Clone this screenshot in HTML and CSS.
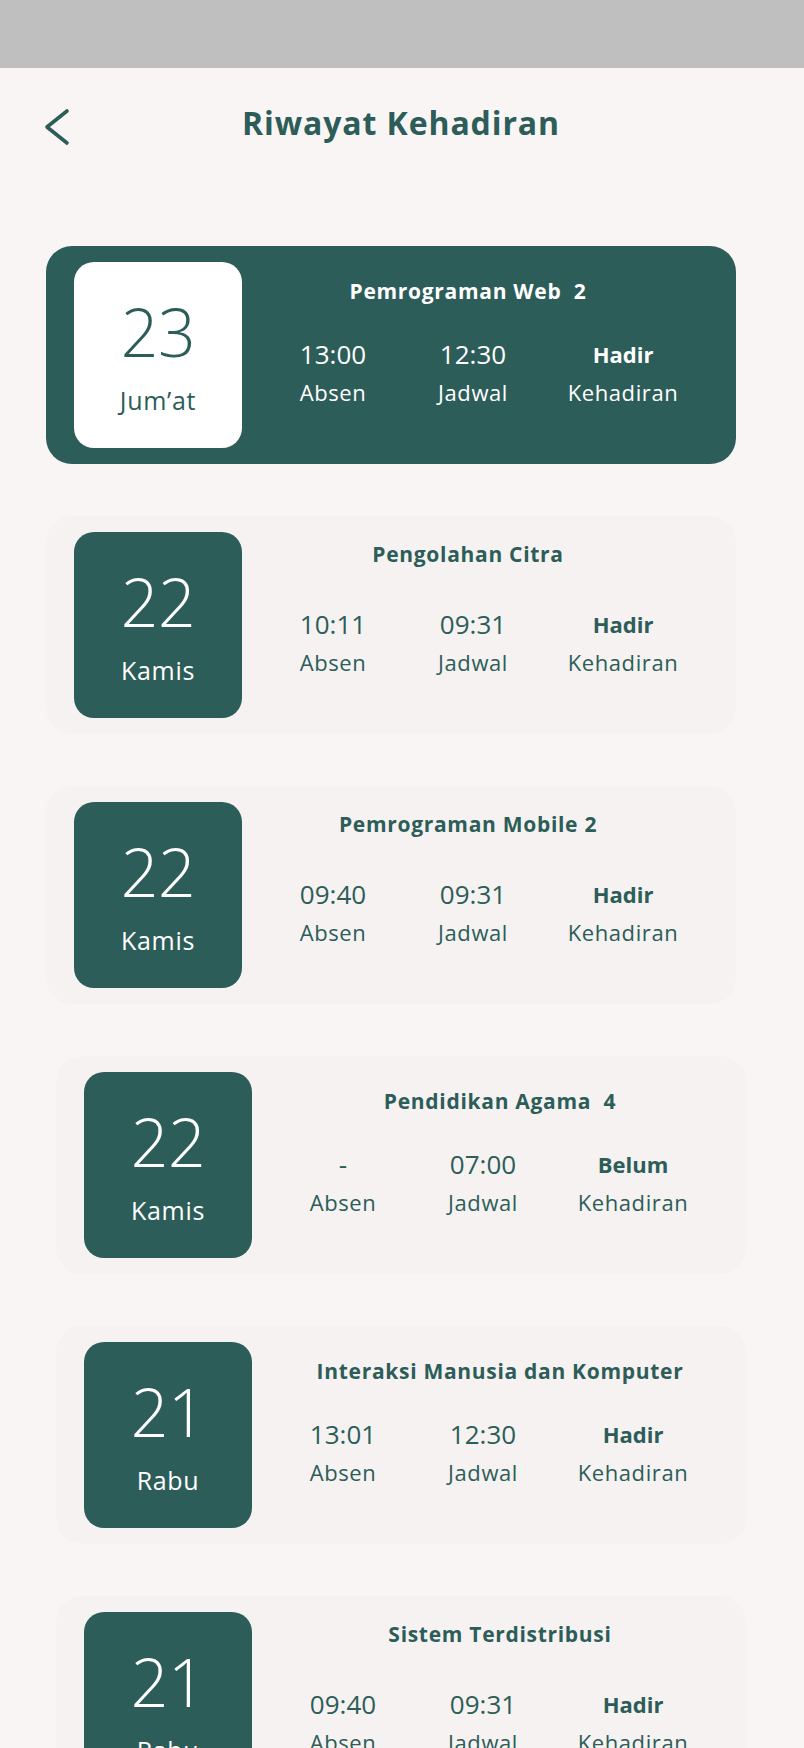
FILE: index.html
```html
<!DOCTYPE html>
<html lang="id">
<head>
<meta charset="utf-8">
<title>Riwayat Kehadiran</title>
<link rel="stylesheet" href="styles.css">
</head>
<body>
<div class="status"></div>
<header class="header">
  <button class="back" aria-label="Kembali">
    <svg width="28" height="38" viewBox="0 0 28 38"><path d="M24 3 L4 19 L24 35" fill="none" stroke="#2c5d59" stroke-width="3.6" stroke-linecap="round" stroke-linejoin="round"/></svg>
  </button>
  <h1 class="title">Riwayat Kehadiran</h1>
  <span></span>
</header>
<main class="list">
  <section class="card active">
    <div class="date"><div class="num">23</div><div class="day">Jum’at</div></div>
    <div class="info">
      <div class="subject low">Pemrograman Web&nbsp; 2</div>
      <div class="cols">
        <div class="col"><div class="val">13:00</div><div class="lab">Absen</div></div>
        <div class="col"><div class="val">12:30</div><div class="lab">Jadwal</div></div>
        <div class="col"><div class="val bold">Hadir</div><div class="lab">Kehadiran</div></div>
      </div>
    </div>
  </section>
  <section class="card">
    <div class="date"><div class="num">22</div><div class="day">Kamis</div></div>
    <div class="info">
      <div class="subject">Pengolahan Citra</div>
      <div class="cols">
        <div class="col"><div class="val">10:11</div><div class="lab">Absen</div></div>
        <div class="col"><div class="val">09:31</div><div class="lab">Jadwal</div></div>
        <div class="col"><div class="val bold">Hadir</div><div class="lab">Kehadiran</div></div>
      </div>
    </div>
  </section>
  <section class="card">
    <div class="date"><div class="num">22</div><div class="day">Kamis</div></div>
    <div class="info">
      <div class="subject">Pemrograman Mobile 2</div>
      <div class="cols">
        <div class="col"><div class="val">09:40</div><div class="lab">Absen</div></div>
        <div class="col"><div class="val">09:31</div><div class="lab">Jadwal</div></div>
        <div class="col"><div class="val bold">Hadir</div><div class="lab">Kehadiran</div></div>
      </div>
    </div>
  </section>
  <section class="card shift">
    <div class="date"><div class="num">22</div><div class="day">Kamis</div></div>
    <div class="info">
      <div class="subject low">Pendidikan Agama&nbsp; 4</div>
      <div class="cols">
        <div class="col"><div class="val">-</div><div class="lab">Absen</div></div>
        <div class="col"><div class="val">07:00</div><div class="lab">Jadwal</div></div>
        <div class="col"><div class="val bold">Belum</div><div class="lab">Kehadiran</div></div>
      </div>
    </div>
  </section>
  <section class="card shift">
    <div class="date"><div class="num">21</div><div class="day">Rabu</div></div>
    <div class="info">
      <div class="subject low">Interaksi Manusia dan Komputer</div>
      <div class="cols">
        <div class="col"><div class="val">13:01</div><div class="lab">Absen</div></div>
        <div class="col"><div class="val">12:30</div><div class="lab">Jadwal</div></div>
        <div class="col"><div class="val bold">Hadir</div><div class="lab">Kehadiran</div></div>
      </div>
    </div>
  </section>
  <section class="card shift">
    <div class="date"><div class="num">21</div><div class="day">Rabu</div></div>
    <div class="info">
      <div class="subject">Sistem Terdistribusi</div>
      <div class="cols">
        <div class="col"><div class="val">09:40</div><div class="lab">Absen</div></div>
        <div class="col"><div class="val">09:31</div><div class="lab">Jadwal</div></div>
        <div class="col"><div class="val bold">Hadir</div><div class="lab">Kehadiran</div></div>
      </div>
    </div>
  </section>
</main>
</body>
</html>
```
FILE: styles.css
```css
* { box-sizing: border-box; }
html, body { margin: 0; padding: 0; }
body {
  width: 804px;
  height: 1748px;
  overflow: hidden;
  background: #f9f5f5;
  font-family: "Open Sans", "Noto Sans", sans-serif;
  color: #2c5d59;
}
.status { height: 68px; background: #bfbfbf; }
.header {
  height: 110px;
  display: grid;
  grid-template-columns: 1fr auto 1fr;
  align-items: center;
  padding: 0 45px 0 43px;
}
.back {
  border: 0; background: none; padding: 0; margin: 0;
  width: 28px; height: 38px; display: flex; margin-top: 8px;
}
.title {
  margin: 0;
  font-size: 32px;
  font-weight: 700;
  letter-spacing: 0.9px;
  color: #2c5d59;
  line-height: 40px;
}
.list {
  display: flex;
  flex-direction: column;
  gap: 52px;
  padding: 68px 0 0 46px;
}
.card {
  width: 690px;
  height: 218px;
  flex: none;
  border-radius: 26px;
  background: #f6f2f1;
  display: flex;
  align-items: flex-start;
  padding: 16px 28px;
}
.card.shift { margin-left: 10px; }
.date {
  width: 168px;
  height: 186px;
  flex: none;
  border-radius: 20px;
  background: #2c5d59;
  color: #fff;
  display: flex;
  flex-direction: column;
  align-items: center;
  padding-top: 29px;
}
.num {
  font-size: 66px;
  font-weight: 300;
  line-height: 80px;
  letter-spacing: -0.5px;
}
.day {
  font-size: 25px;
  font-weight: 400;
  line-height: 28px;
  letter-spacing: 0.7px;
  margin-top: 15px;
}
.info {
  margin-left: 21px;
  width: 440px;
  padding-top: 9px;
  display: flex;
  flex-direction: column;
}
.subject {
  font-size: 21px;
  font-weight: 700;
  line-height: 26px;
  letter-spacing: 0.7px;
  text-align: center;
  padding-right: 30px;
  margin-bottom: 41px;
  white-space: nowrap;
}
.subject.low { margin-top: 7px; margin-bottom: 34px; }
.card.shift .subject { padding-right: 0; padding-left: 14px; }
.card.active .subject { padding-right: 30px; padding-left: 0; }
.cols {
  display: grid;
  grid-template-columns: 140px 140px 160px;
}
.col {
  display: flex;
  flex-direction: column;
  align-items: center;
}
.val {
  font-size: 26px;
  font-weight: 400;
  line-height: 32px;
}
.val.bold { font-size: 22px; font-weight: 700; }
.lab {
  font-size: 22px;
  font-weight: 400;
  line-height: 28px;
  letter-spacing: 0.6px;
  margin-top: 8px;
}
.card.active { background: #2c5d59; color: #fff; }
.card.active .date { background: #fff; color: #2c5d59; }
```
